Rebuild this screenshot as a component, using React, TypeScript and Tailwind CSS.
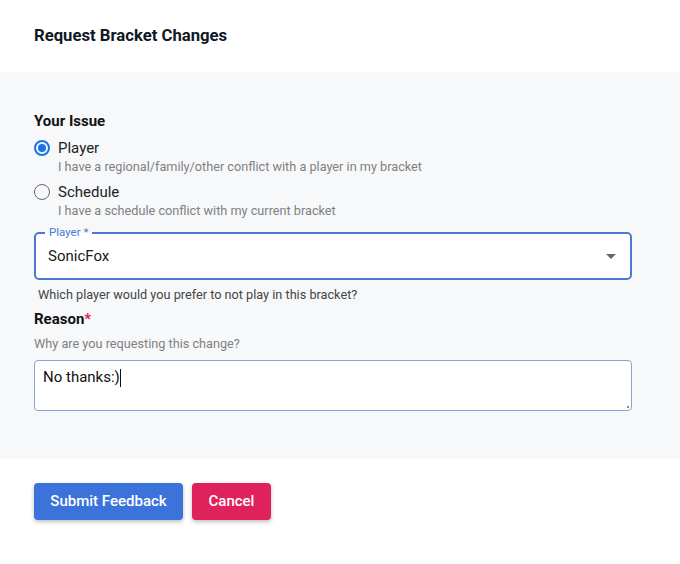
import React from "react";

export default function App() {
  return (
    <div className="w-[680px] h-[564px] bg-white text-[#1f2328]" style={{ fontFamily: "Roboto, 'Liberation Sans', sans-serif" }}>
      <div className="h-[72px] flex items-center px-[34px]">
        <h1 className="text-[16.7px] font-bold text-[#111827] leading-none">Request Bracket Changes</h1>
      </div>
      <div className="bg-[#f7f8fa] h-[387px] px-[34px] pt-[40px] pr-[48px]">
        <div className="text-[15px] font-bold text-[#111] leading-[18px]">Your Issue</div>
        <div className="mt-[8px] flex items-center gap-[8px] h-[20px]">
          <span className="w-[16px] h-[16px] rounded-full border-2 border-[#1a73e8] flex items-center justify-center">
            <span className="w-[8px] h-[8px] rounded-full bg-[#1a73e8]" />
          </span>
          <span className="text-[15px] text-[#222]">Player</span>
        </div>
        <div className="ml-[24px] text-[12.7px] text-[#808080] leading-[18px]">I have a regional/family/other conflict with a player in my bracket</div>
        <div className="mt-[6px] flex items-center gap-[8px] h-[20px]">
          <span className="w-[16px] h-[16px] rounded-full border-[1.5px] border-[#666]" />
          <span className="text-[15px] text-[#222]">Schedule</span>
        </div>
        <div className="ml-[24px] text-[12.7px] text-[#808080] leading-[18px]">I have a schedule conflict with my current bracket</div>
        <div className="relative mt-[12px] h-[48px] border-2 border-[#4a78d6] rounded-[5px] bg-white flex items-center pl-[12px] pr-[14px]">
          <span className="absolute left-[9px] -top-[9px] px-[4px] text-[11.5px] leading-[14px] text-[#4a78d6]" style={{ background: "linear-gradient(#f7f8fa 55%, #ffffff 55%)" }}>Player *</span>
          <span className="text-[15px] text-[#1a1a1a] flex-1">SonicFox</span>
          <svg width="10" height="5" viewBox="0 0 10 5"><path d="M0 0h10L5 5z" fill="#666" /></svg>
        </div>
        <div className="mt-[7px] ml-[4px] text-[12.7px] text-[#444] leading-[16px]">Which player would you prefer to not play in this bracket?</div>
        <div className="mt-[7px] text-[15px] font-bold text-[#111] leading-[18px]">Reason<span className="text-[#e11d48]">*</span></div>
        <div className="mt-[8px] text-[12.7px] text-[#808080] leading-[16px]">Why are you requesting this change?</div>
        <div className="mt-[8px] h-[51px] border-[1.5px] border-[#8aa1da] rounded-[4px] bg-white pl-[8px] pt-[4px] relative">
          <span className="text-[15px] text-[#111]">No thanks:)</span><span className="inline-block w-[1px] h-[18px] bg-[#111] align-middle" />
          <svg className="absolute right-[1px] bottom-[1px]" width="4" height="4" viewBox="0 0 4 4"><circle cx="2" cy="2" r="1" fill="#666" /></svg>
        </div>
      </div>
      <div className="px-[34px] pt-[24px] flex gap-[9px]">
        <button className="h-[37px] w-[149px] rounded-[4px] bg-[#3b73db] text-white text-[15px] font-medium shadow-[0_2px_4px_rgba(0,0,0,0.25)]">Submit Feedback</button>
        <button className="h-[37px] w-[79px] rounded-[4px] bg-[#df215c] text-white text-[15px] font-medium shadow-[0_2px_4px_rgba(0,0,0,0.25)]">Cancel</button>
      </div>
    </div>
  );
}
